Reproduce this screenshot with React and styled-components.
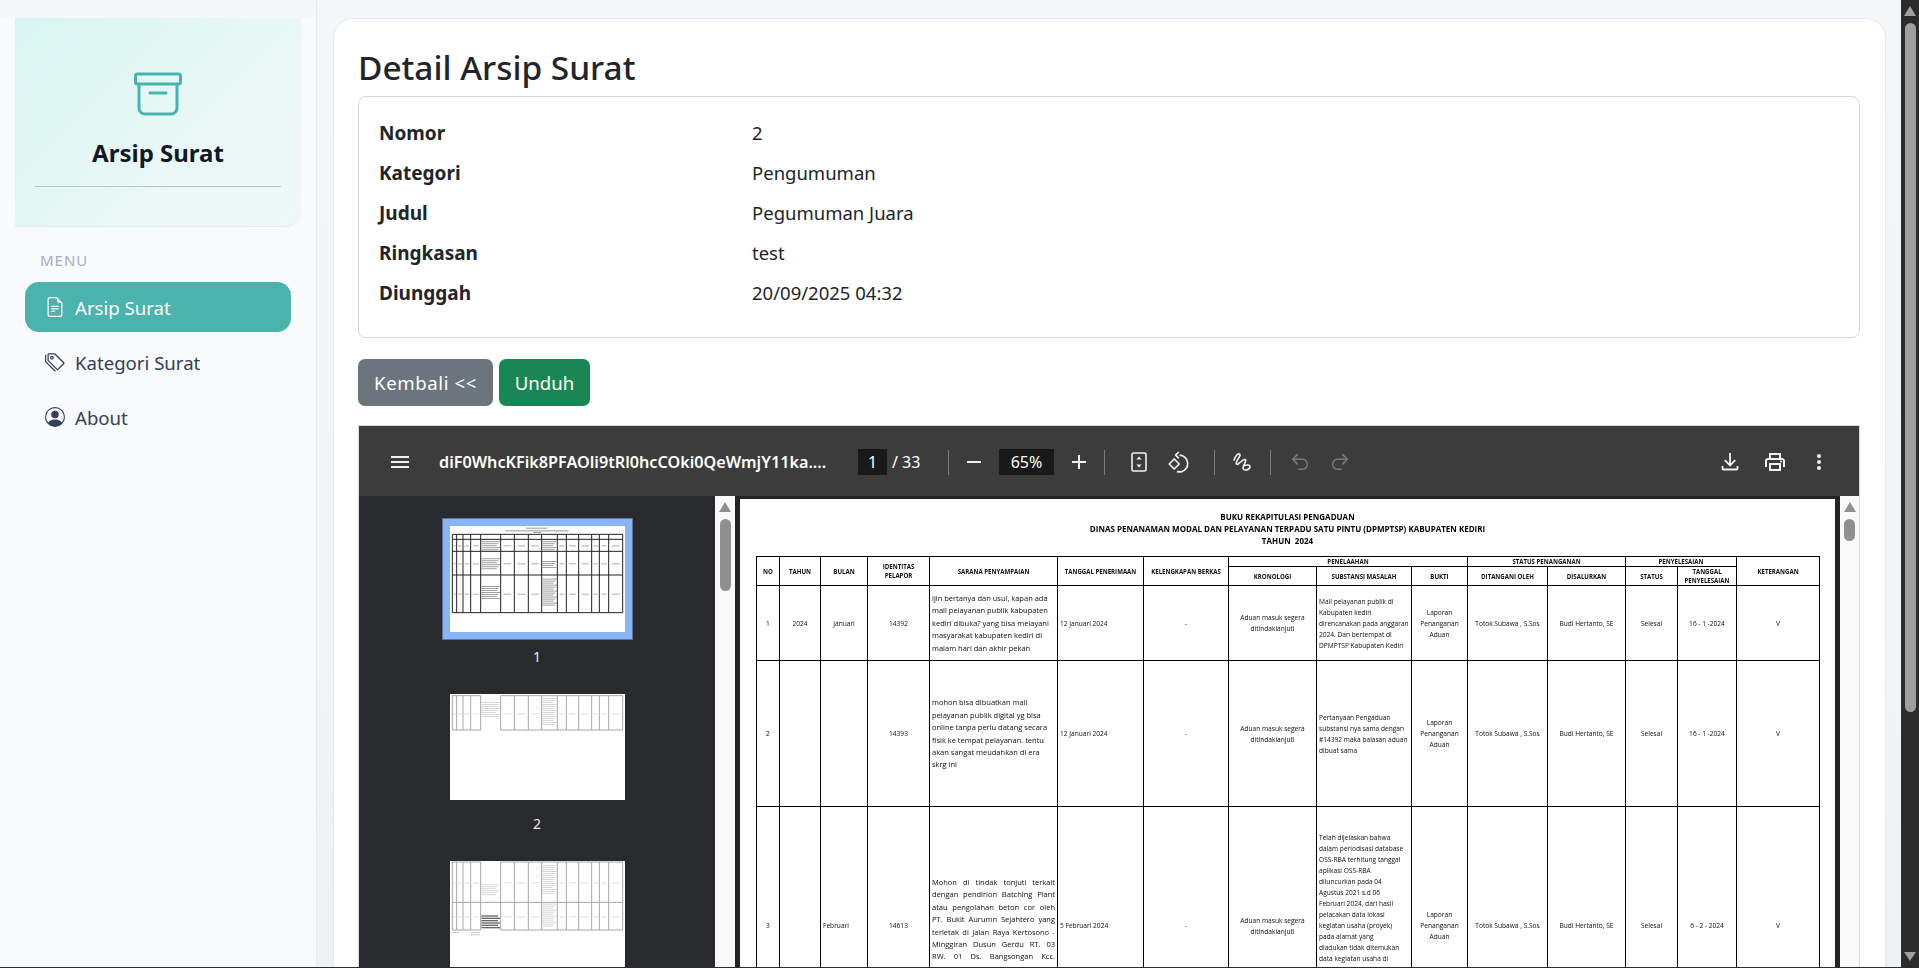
import styled, { createGlobalStyle } from "styled-components";
import { BsFileEarmarkText, BsTags, BsPersonCircle } from "react-icons/bs";
import { Undo2, Redo2 } from "lucide-react";

const COLS = [23, 41, 47, 62, 128, 86, 85, 88, 95, 56, 80, 78, 52, 59, 83];

const ROWS = [
  {
    no: "1",
    tahun: "2024",
    bulan: "Januari",
    id: "14392",
    sarana: [
      "ijin bertanya dan usul, kapan ada",
      "mall pelayanan publik kabupaten",
      "kediri dibuka? yang bisa melayani",
      "masyarakat kabupaten kediri di",
      "malam hari dan akhir pekan",
    ],
    tanggal: "12 Januari 2024",
    substansi: [
      "Mall pelayanan publik di",
      "Kabupaten kediri",
      "direncanakan pada anggaran",
      "2024. Dan bertempat di",
      "DPMPTSP Kabupaten Kediri",
    ],
    selesai: "16 - 1 -2024",
    height: 75,
  },
  {
    no: "2",
    tahun: "",
    bulan: "",
    id: "14393",
    sarana: [
      "mohon bisa dibuatkan mall",
      "pelayanan publik digital yg bisa",
      "online tanpa perlu datang secara",
      "fisik ke tempat pelayanan. tentu",
      "akan sangat meudahkan di era",
      "skrg ini",
    ],
    tanggal: "12 Januari 2024",
    substansi: [
      "Pertanyaan Pengaduan",
      "substansi nya sama dengan",
      "#14392 maka balasan aduan",
      "dibuat sama",
    ],
    selesai: "16 - 1 -2024",
    height: 146,
  },
  {
    no: "3",
    tahun: "",
    bulan: "Februari",
    id: "14613",
    justify: true,
    sarana: [
      "Mohon di tindak tonjuti terkait",
      "dengan pendirion Batching Plant",
      "atau pengolahan beton cor oleh",
      "PT. Bukit Aurumn Sejahtero yang",
      "terletak di Jalan Raya Kertosono -",
      "Minggiran Dusun Gerdu RT. 03",
      "RW. 01 Ds. Bangsongan Kcc.",
      "Kayen Kidul Kab.",
    ],
    tanggal: "5 Februari 2024",
    substansi: [
      "Telah dijelaskan bahwa",
      "dalam periodisasi database",
      "OSS-RBA terhitung tanggal",
      "aplikasi OSS-RBA",
      "diluncurkan pada 04",
      "Agustus 2021 s.d 06",
      "Februari 2024, dari hasil",
      "pelacakan data lokasi",
      "kegiatan usaha (proyek)",
      "pada alamat yang",
      "diadukan tidak ditemukan",
      "data kegiatan usaha di",
    ],
    selesai: "6 - 2 - 2024",
    height: 238,
    tall: true,
  },
];

const DETAILS = [
  ["Nomor", "2"],
  ["Kategori", "Pengumuman"],
  ["Judul", "Pegumuman Juara"],
  ["Ringkasan", "test"],
  ["Diunggah", "20/09/2025 04:32"],
];

const THUMB_X = [7, 20, 39, 62, 92, 152, 193, 235, 275, 322, 349, 386, 425, 448, 476, 518];

const THUMBS = [
  {
    n: 1,
    active: true,
    top: 25,
    bottom: 260,
    stroke: "#222",
    rows: [40, 76, 147],
    centers: [58, 112, 203],
    text: [
      [94, 46, 56, 5],
      [94, 97, 56, 6],
      [94, 180, 56, 7],
      [277, 46, 42, 5],
      [277, 105, 42, 4],
      [277, 158, 44, 14],
    ],
    shade: "#8c8c8c",
  },
  {
    n: 2,
    top: 5,
    bottom: 108,
    open: true,
    stroke: "#a6a6a6",
    rows: [],
    centers: [58],
    text: [
      [94, 24, 54, 8],
      [277, 12, 42, 14],
    ],
    shade: "#cfcfcf",
  },
  {
    n: 3,
    top: 3,
    bottom: 207,
    open: true,
    stroke: "#a6a6a6",
    rows: [124],
    centers: [64, 166],
    text: [
      [94, 70, 54, 6],
      [277, 12, 42, 15],
      [277, 128, 42, 12],
    ],
    dark: [94, 163, 50, 6],
    notes: [
      [7, 213, 20],
      [62, 213, 28],
      [62, 220, 28],
    ],
    shade: "#cfcfcf",
  },
];

const GlobalStyle = createGlobalStyle`
  html, body {
    margin: 0;
    padding: 0;
    height: 100%;
    overflow: hidden;
  }

  body {
    font-family: "Noto Sans", "Open Sans", sans-serif;
    color: #212529;
    background: #f1f5f9;
  }

  * {
    box-sizing: border-box;
  }
`;

const Shell = styled.div`
  display: flex;
  height: 968px;
  overflow: hidden;
  border-bottom: 1px solid #2b2b2b;
`;

const Sidebar = styled.aside`
  width: 317px;
  flex: none;
  padding: 18px 15px 0;
  background: #f8fafc;
  border-right: 1px solid #e6eaef;
  box-shadow: inset 0 18px 0 #f5f8fb;
`;

const Brand = styled.div`
  height: 209px;
  padding-top: 54px;
  display: flex;
  flex-direction: column;
  align-items: center;
  border-bottom: 1px solid #e6eaed;
  border-radius: 0 0 16px 0;
  background: linear-gradient(135deg, #d9f5f1 0%, #e9f8f6 60%, #eff9fa 100%);
`;

const BrandTitle = styled.h1`
  margin: 19px 0 0;
  font-size: 24px;
  line-height: 36px;
  font-weight: 700;
  color: #111827;
`;

const BrandRule = styled.hr`
  width: 246px;
  margin: 15px 0 0;
  border: none;
  border-top: 1px solid #b7c4c4;
`;

const MenuLabel = styled.div`
  margin: 24px 0 0 25px;
  height: 18px;
  font-size: 15px;
  line-height: 18px;
  letter-spacing: 1px;
  color: #a3aec2;
`;

const Nav = styled.nav`
  margin: 13px 0 0 10px;
  width: 266px;
  display: flex;
  flex-direction: column;
  gap: 5px;
`;

const NavItem = styled.a`
  height: 50px;
  padding-left: 20px;
  display: flex;
  align-items: center;
  gap: 10px;
  border-radius: 14px;
  font-size: 18.6px;
  color: ${(p) => (p.$active ? "#fff" : "#34405a")};
  background: ${(p) => (p.$active ? "#4ab3ae" : "transparent")};

  svg {
    width: 20px;
    height: 20px;
    flex: none;
  }
`;

const MainArea = styled.main`
  flex: 1;
  min-width: 0;
  padding: 18px 15px 0 16px;
  background: linear-gradient(180deg, #f5f8fb 0%, #eef2f6 100%);
`;

const Card = styled.section`
  height: 950px;
  padding: 25px 25px 0 24px;
  overflow: hidden;
  background: #fff;
  border: 1px solid #e6eaef;
  border-bottom: none;
  border-radius: 20px 20px 0 0;
`;

const PageTitle = styled.h2`
  margin: 0;
  height: 52px;
  font-size: 33.4px;
  line-height: 46px;
  font-weight: 500;
  color: #212529;
`;

const DetailCard = styled.div`
  height: 242px;
  padding: 16px 20px 0;
  border: 1px solid #d6d8da;
  border-radius: 8px;
`;

const DetailRow = styled.div`
  display: grid;
  grid-template-columns: 373px 1fr;
  height: 40px;
  align-items: baseline;
  line-height: 40px;
  font-size: 18.5px;
`;

const DetailLabel = styled.div`
  font-size: 19px;
  font-weight: 700;
`;

const Actions = styled.div`
  margin-top: 21px;
  display: flex;
  gap: 6px;
`;

const Button = styled.a`
  height: 47px;
  width: ${(p) => p.$width}px;
  display: flex;
  align-items: center;
  justify-content: center;
  border-radius: 7px;
  font-size: 18.6px;
  letter-spacing: ${(p) => p.$spacing || 0}px;
  color: #fff;
  background: ${(p) => p.$bg};
`;

const Viewer = styled.div`
  margin-top: 19px;
  width: 1502px;
  height: 544px;
  display: flex;
  flex-direction: column;
  overflow: hidden;
  border: 1px solid #dcdcdc;
  border-bottom: none;
  background: #28292c;
`;

const Toolbar = styled.div`
  flex: none;
  height: 70px;
  padding: 2px 20px 0 21px;
  display: flex;
  align-items: center;
  color: #fff;
  background: #3c3c3c;
`;

const ToolButton = styled.span`
  width: 40px;
  height: 40px;
  flex: none;
  margin-left: ${(p) => p.$ml || 0}px;
  display: flex;
  align-items: center;
  justify-content: center;
  color: ${(p) => (p.$off ? "#7a7a7a" : "#f1f1f1")};
`;

const FileName = styled.div`
  width: 392px;
  margin-left: 19px;
  flex: none;
  white-space: nowrap;
  overflow: hidden;
  font-size: 16.2px;
  font-weight: 600;
`;

const NumberBox = styled.span`
  width: ${(p) => p.$width}px;
  height: 26px;
  flex: none;
  margin-left: ${(p) => p.$ml}px;
  display: flex;
  align-items: center;
  justify-content: center;
  font-size: 16px;
  background: #191919;
`;

const PageTotal = styled.span`
  width: 29px;
  margin-left: 5px;
  flex: none;
  white-space: nowrap;
  font-size: 16px;
`;

const ToolDivider = styled.span`
  width: 1px;
  height: 25px;
  flex: none;
  margin-left: ${(p) => p.$ml}px;
  background: #7c7c7c;
`;

const ToolRight = styled.div`
  margin-left: auto;
  display: flex;
  gap: 4.5px;
`;

const ViewerBody = styled.div`
  flex: 1;
  min-height: 0;
  display: flex;
`;

const ThumbPanel = styled.div`
  width: 356px;
  flex: none;
  padding-top: 22px;
  display: flex;
  flex-direction: column;
  align-items: center;
  gap: 27px;
  background: #292a2d;
`;

const ThumbItem = styled.div`
  display: flex;
  flex-direction: column;
  align-items: center;
  gap: 14px;
  color: #e8eaed;
  font-size: 14px;
  line-height: 20px;
`;

const ThumbFrame = styled.div`
  width: 175px;
  height: 106px;
  background: #fff;
  box-shadow: ${(p) => (p.$active ? "0 0 0 7px #8ab4f8, 0 0 0 8px #5c7396" : "none")};
  margin: ${(p) => (p.$active ? "8px 0 1px" : "0")};

  svg {
    display: block;
  }
`;

const Rail = styled.div`
  width: ${(p) => p.$width}px;
  flex: none;
  padding-top: 6px;
  display: flex;
  flex-direction: column;
  align-items: center;
  background: ${(p) => p.$bg};
`;

const ArrowUp = styled.span`
  width: 0;
  height: 0;
  border-left: 6px solid transparent;
  border-right: 6px solid transparent;
  border-bottom: 10px solid ${(p) => p.$color};
`;

const ArrowDown = styled(ArrowUp)`
  margin-top: auto;
  margin-bottom: 6px;
  border-bottom: none;
  border-top: 9px solid ${(p) => p.$color};
`;

const RailThumb = styled.span`
  width: ${(p) => p.$width}px;
  height: ${(p) => p.$height}px;
  margin-top: 7px;
  flex: none;
  border-radius: 6px;
  background: ${(p) => p.$color};
`;

const PageWell = styled.div`
  flex: 1;
  min-width: 0;
  padding: 3px 5px 0;
  overflow: hidden;
  background: #232427;
`;

const PdfPage = styled.div`
  height: 600px;
  padding: 12px 16px 0;
  overflow: hidden;
  background: #fff;
  font-family: "Open Sans", "Noto Sans", sans-serif;
  color: #0d0d0d;
  filter: blur(0.25px);
`;

const PdfHeading = styled.div`
  text-align: center;
  white-space: pre;
  font-size: 8px;
  line-height: 12px;
  font-weight: 700;
  color: #000;
`;

const PdfTable = styled.table`
  width: 1064px;
  margin-top: 9px;
  table-layout: fixed;
  border-collapse: collapse;
  font-size: 6.6px;
  line-height: 11px;

  th,
  td {
    padding: 0;
    border: 1px solid #000;
    text-align: center;
    overflow: hidden;
  }

  th {
    font-size: 6.1px;
    line-height: 9px;
    font-weight: 700;
  }
`;

const LeftCell = styled.td`
  && {
    text-align: left;
    padding-left: 2px;
  }
`;

const SaranaCell = styled(LeftCell)`
  font-size: 7.5px;
  line-height: 12.4px;
`;

const SubstansiCell = styled(LeftCell)`
  && {
    vertical-align: ${(p) => (p.$tall ? "top" : "middle")};
    padding-top: ${(p) => (p.$tall ? "25px" : "0")};
  }
`;

const Line = styled.span`
  display: block;
  padding-right: 2px;
  text-align-last: ${(p) => (p.$justify ? "justify" : "left")};
  white-space: ${(p) => (p.$justify ? "normal" : "nowrap")};
`;

const ArchiveIcon = () => (
  <svg width="48" height="44" viewBox="0 0 48 44" fill="none" stroke="#4ab3ae" strokeWidth="3" strokeLinejoin="round" strokeLinecap="round">
    <rect x="1.5" y="2" width="45" height="10" rx="2" />
    <path d="M5 12v24a6 6 0 0 0 6 6h26a6 6 0 0 0 6-6V12" />
    <path d="M16 21h16" />
  </svg>
);

const MenuIcon = () => (
  <svg width="18" height="14" viewBox="0 0 18 14" fill="none" stroke="currentColor" strokeWidth="2">
    <path d="M0 2h18M0 7h18M0 12h18" />
  </svg>
);

const MinusIcon = () => (
  <svg width="14" height="14" viewBox="0 0 14 14" stroke="currentColor" strokeWidth="2">
    <path d="M0 7h14" />
  </svg>
);

const PlusIcon = () => (
  <svg width="14" height="14" viewBox="0 0 14 14" stroke="currentColor" strokeWidth="2">
    <path d="M0 7h14M7 0v14" />
  </svg>
);

const FitIcon = () => (
  <svg width="16" height="20" viewBox="0 0 16 20" fill="none">
    <rect x="1" y="1" width="14" height="18" rx="1.5" stroke="currentColor" strokeWidth="1.6" />
    <path d="M8 4.5l2.5 3h-5zM8 15.5l-2.5-3h5z" fill="currentColor" />
  </svg>
);

const RotateIcon = () => (
  <svg width="22" height="22" viewBox="0 0 22 22" fill="none" stroke="currentColor" strokeWidth="1.7" strokeLinejoin="round">
    <path d="M6.2 8l5 5-5 5-5-5z" />
    <path d="M11.5 4.2a8.4 8.4 0 0 1 1.6 16.6 8.6 8.6 0 0 1-4.2-.4" />
    <path d="M10.8 1l-3.2 3.2 3.2 3.2" />
  </svg>
);

const DrawIcon = () => (
  <svg width="20" height="20" viewBox="0 0 20 20" fill="none" stroke="currentColor" strokeWidth="1.6" strokeLinecap="round" strokeLinejoin="round">
    <path d="M2 8C3.500 3 7 .5 8 2.500 9 4.500 3 9 4.500 12 6 14 10 7 13 7.500 15.500 8 11 13 11 16 11 19 17 18.500 18 15 18.500 12.500 14 12.500 11.500 14" />
  </svg>
);

const DownloadIcon = () => (
  <svg width="18" height="18" viewBox="0 0 18 18" fill="none" stroke="currentColor" strokeWidth="1.8">
    <path d="M9 0v12M3.800 7.200L9 12.400l5.200-5.200" />
    <path d="M1.500 13v2.500a1 1 0 0 0 1 1h13a1 1 0 0 0 1-1V13" />
  </svg>
);

const PrintIcon = () => (
  <svg width="24" height="24" viewBox="0 0 24 24" fill="currentColor">
    <path d="M19 8h-1V3H6v5H5c-1.660 0-3 1.340-3 3v6h4v4h12v-4h4v-6c0-1.660-1.340-3-3-3zM8 5h8v3H8V5zm8 14H8v-4h8v4zm2-2v-4H6v4H4v-6c0-.550.450-1 1-1h14c.550 0 1 .450 1 1v6h-2z" />
    <circle cx="18" cy="11.500" r="1" />
  </svg>
);

const KebabIcon = () => (
  <svg width="6" height="16" viewBox="0 0 6 16" fill="currentColor">
    <circle cx="3" cy="2" r="2" />
    <circle cx="3" cy="8" r="2" />
    <circle cx="3" cy="14" r="2" />
  </svg>
);

const ThumbDrawing = ({ thumb }) => {
  const { top, bottom, open, stroke, rows, centers, text, dark, notes, shade } = thumb;
  const cells = THUMB_X.slice(0, -1).map((x, i) => [x, THUMB_X[i + 1]]);
  return (
    <svg width="175" height="106" viewBox="0 0 525 318">
      {!open && (
        <g fill="#999">
          <rect x="228" y="5" width="64" height="3" />
          <rect x="166" y="13" width="190" height="3" />
          <rect x="250" y="18" width="24" height="3" />
        </g>
      )}
      <g stroke={stroke} strokeWidth="3" fill="none">
        {THUMB_X.map((x) => (
          <path key={x} d={`M${x} ${top}V${bottom}`} />
        ))}
        <path d={open ? `M7 ${top}H92M152 ${top}H518M7 ${bottom}H92M152 ${bottom}H518` : `M7 ${top}H518M7 ${bottom}H518`} />
        {rows.map((y) => (
          <path key={y} d={`M7 ${y}H518`} />
        ))}
      </g>
      <g fill={shade} opacity="0.7">
        {centers.flatMap((y) =>
          cells
            .filter(([a]) => a !== 92 && a !== 275)
            .map(([a, b]) => <rect key={`${y}-${a}`} x={a + (b - a) * 0.22} y={y} width={(b - a) * 0.56} height="3" />)
        )}
      </g>
      <g fill={shade}>
        {text.flatMap(([x, y, w, n]) =>
          Array.from({ length: n }, (_, i) => <rect key={`${x}-${y}-${i}`} x={x} y={y + i * 6} width={w - (i % 3) * 5} height="2.500" />)
        )}
      </g>
      {dark && (
        <g fill="#666">
          {Array.from({ length: dark[3] }, (_, i) => (
            <rect key={i} x={dark[0]} y={dark[1] + i * 7} width={dark[2] + (i % 2) * 6} height="4" />
          ))}
        </g>
      )}
      {notes && (
        <g fill="#ccc">
          {notes.map(([x, y, w]) => (
            <rect key={`${x}-${y}`} x={x} y={y} width={w} height="3" />
          ))}
        </g>
      )}
    </svg>
  );
};

const Lines = ({ items, justify }) =>
  items.map((t, i) => (
    <Line key={i} $justify={justify && i < items.length - 1}>
      {t}
    </Line>
  ));

const App = () => {
  return (
    <>
      <GlobalStyle />
      <Shell>
        <Sidebar>
          <Brand>
            <ArchiveIcon />
            <BrandTitle>Arsip Surat</BrandTitle>
            <BrandRule />
          </Brand>
          <MenuLabel>MENU</MenuLabel>
          <Nav>
            <NavItem $active>
              <BsFileEarmarkText />
              Arsip Surat
            </NavItem>
            <NavItem>
              <BsTags />
              Kategori Surat
            </NavItem>
            <NavItem>
              <BsPersonCircle />
              About
            </NavItem>
          </Nav>
        </Sidebar>

        <MainArea>
          <Card>
            <PageTitle>Detail Arsip Surat</PageTitle>
            <DetailCard>
              {DETAILS.map(([label, value]) => (
                <DetailRow key={label}>
                  <DetailLabel>{label}</DetailLabel>
                  <div>{value}</div>
                </DetailRow>
              ))}
            </DetailCard>
            <Actions>
              <Button $width={135} $bg="#6c757d" $spacing={0.6}>
                Kembali &lt;&lt;
              </Button>
              <Button $width={91} $bg="#198754">
                Unduh
              </Button>
            </Actions>

            <Viewer>
              <Toolbar>
                <ToolButton>
                  <MenuIcon />
                </ToolButton>
                <FileName>diF0WhcKFik8PFAOli9tRl0hcCOki0QeWmjY11ka....</FileName>
                <NumberBox $width={29} $ml={27}>
                  1
                </NumberBox>
                <PageTotal>/ 33</PageTotal>
                <ToolDivider $ml={27} />
                <ToolButton $ml={5}>
                  <MinusIcon />
                </ToolButton>
                <NumberBox $width={55} $ml={5}>
                  65%
                </NumberBox>
                <ToolButton $ml={5}>
                  <PlusIcon />
                </ToolButton>
                <ToolDivider $ml={5} />
                <ToolButton $ml={14}>
                  <FitIcon />
                </ToolButton>
                <ToolButton>
                  <RotateIcon />
                </ToolButton>
                <ToolDivider $ml={15} />
                <ToolButton $ml={7}>
                  <DrawIcon />
                </ToolButton>
                <ToolDivider $ml={8} />
                <ToolButton $ml={9} $off>
                  <Undo2 size={22} strokeWidth={1.7} />
                </ToolButton>
                <ToolButton $off>
                  <Redo2 size={22} strokeWidth={1.7} />
                </ToolButton>
                <ToolRight>
                  <ToolButton>
                    <DownloadIcon />
                  </ToolButton>
                  <ToolButton>
                    <PrintIcon />
                  </ToolButton>
                  <ToolButton>
                    <KebabIcon />
                  </ToolButton>
                </ToolRight>
              </Toolbar>

              <ViewerBody>
                <ThumbPanel>
                  {THUMBS.map((thumb) => (
                    <ThumbItem key={thumb.n}>
                      <ThumbFrame $active={thumb.active}>
                        <ThumbDrawing thumb={thumb} />
                      </ThumbFrame>
                      {thumb.n}
                    </ThumbItem>
                  ))}
                </ThumbPanel>
                <Rail $width={20} $bg="#fafafa">
                  <ArrowUp $color="#8f8f8f" />
                  <RailThumb $width={11} $height={72} $color="#8f8f8f" />
                </Rail>

                <PageWell>
                  <PdfPage>
                    <PdfHeading>BUKU REKAPITULASI PENGADUAN</PdfHeading>
                    <PdfHeading>DINAS PENANAMAN MODAL DAN PELAYANAN TERPADU SATU PINTU (DPMPTSP) KABUPATEN KEDIRI</PdfHeading>
                    <PdfHeading>{"TAHUN  2024"}</PdfHeading>
                    <PdfTable>
                      <colgroup>
                        {COLS.map((w, i) => (
                          <col key={i} style={{ width: w }} />
                        ))}
                      </colgroup>
                      <thead>
                        <tr style={{ height: 10 }}>
                          <th rowSpan={2}>NO</th>
                          <th rowSpan={2}>TAHUN</th>
                          <th rowSpan={2}>BULAN</th>
                          <th rowSpan={2}>
                            IDENTITAS
                            <br />
                            PELAPOR
                          </th>
                          <th rowSpan={2}>SARANA PENYAMPAIAN</th>
                          <th rowSpan={2}>TANGGAL PENERIMAAN</th>
                          <th rowSpan={2}>KELENGKAPAN BERKAS</th>
                          <th colSpan={3}>PENELAAHAN</th>
                          <th colSpan={2}>STATUS PENANGANAN</th>
                          <th colSpan={2}>PENYELESAIAN</th>
                          <th rowSpan={2}>KETERANGAN</th>
                        </tr>
                        <tr style={{ height: 19 }}>
                          <th>KRONOLOGI</th>
                          <th>SUBSTANSI MASALAH</th>
                          <th>BUKTI</th>
                          <th>DITANGANI OLEH</th>
                          <th>DISALURKAN</th>
                          <th>STATUS</th>
                          <th>
                            TANGGAL
                            <br />
                            PENYELESAIAN
                          </th>
                        </tr>
                      </thead>
                      <tbody>
                        {ROWS.map((r) => (
                          <tr key={r.no} style={{ height: r.height }}>
                            <td>{r.no}</td>
                            <td>{r.tahun}</td>
                            {r.justify ? <LeftCell>{r.bulan}</LeftCell> : <td>{r.bulan}</td>}
                            <td>{r.id}</td>
                            <SaranaCell>
                              <Lines items={r.sarana} justify={r.justify} />
                            </SaranaCell>
                            <LeftCell>{r.tanggal}</LeftCell>
                            <td>-</td>
                            <td>
                              Aduan masuk segera
                              <br />
                              ditindaklanjuti
                            </td>
                            <SubstansiCell $tall={r.tall}>
                              <Lines items={r.substansi} />
                            </SubstansiCell>
                            <td>
                              Laporan
                              <br />
                              Penanganan
                              <br />
                              Aduan
                            </td>
                            <td>Totok Subawa , S.Sos</td>
                            <td>Budi Hertanto, SE</td>
                            <td>Selesai</td>
                            <td>{r.selesai}</td>
                            <td>V</td>
                          </tr>
                        ))}
                      </tbody>
                    </PdfTable>
                  </PdfPage>
                </PageWell>

                <Rail $width={19} $bg="#fafafa">
                  <ArrowUp $color="#8f8f8f" />
                  <RailThumb $width={11} $height={22} $color="#8f8f8f" />
                </Rail>
              </ViewerBody>
            </Viewer>
          </Card>
        </MainArea>

        <Rail $width={18} $bg="#2b2b2b">
          <ArrowUp $color="#9f9f9f" />
          <RailThumb $width={11} $height={689} $color="#9f9f9f" />
          <ArrowDown $color="#9f9f9f" />
        </Rail>
      </Shell>
    </>
  );
};

export default App;
